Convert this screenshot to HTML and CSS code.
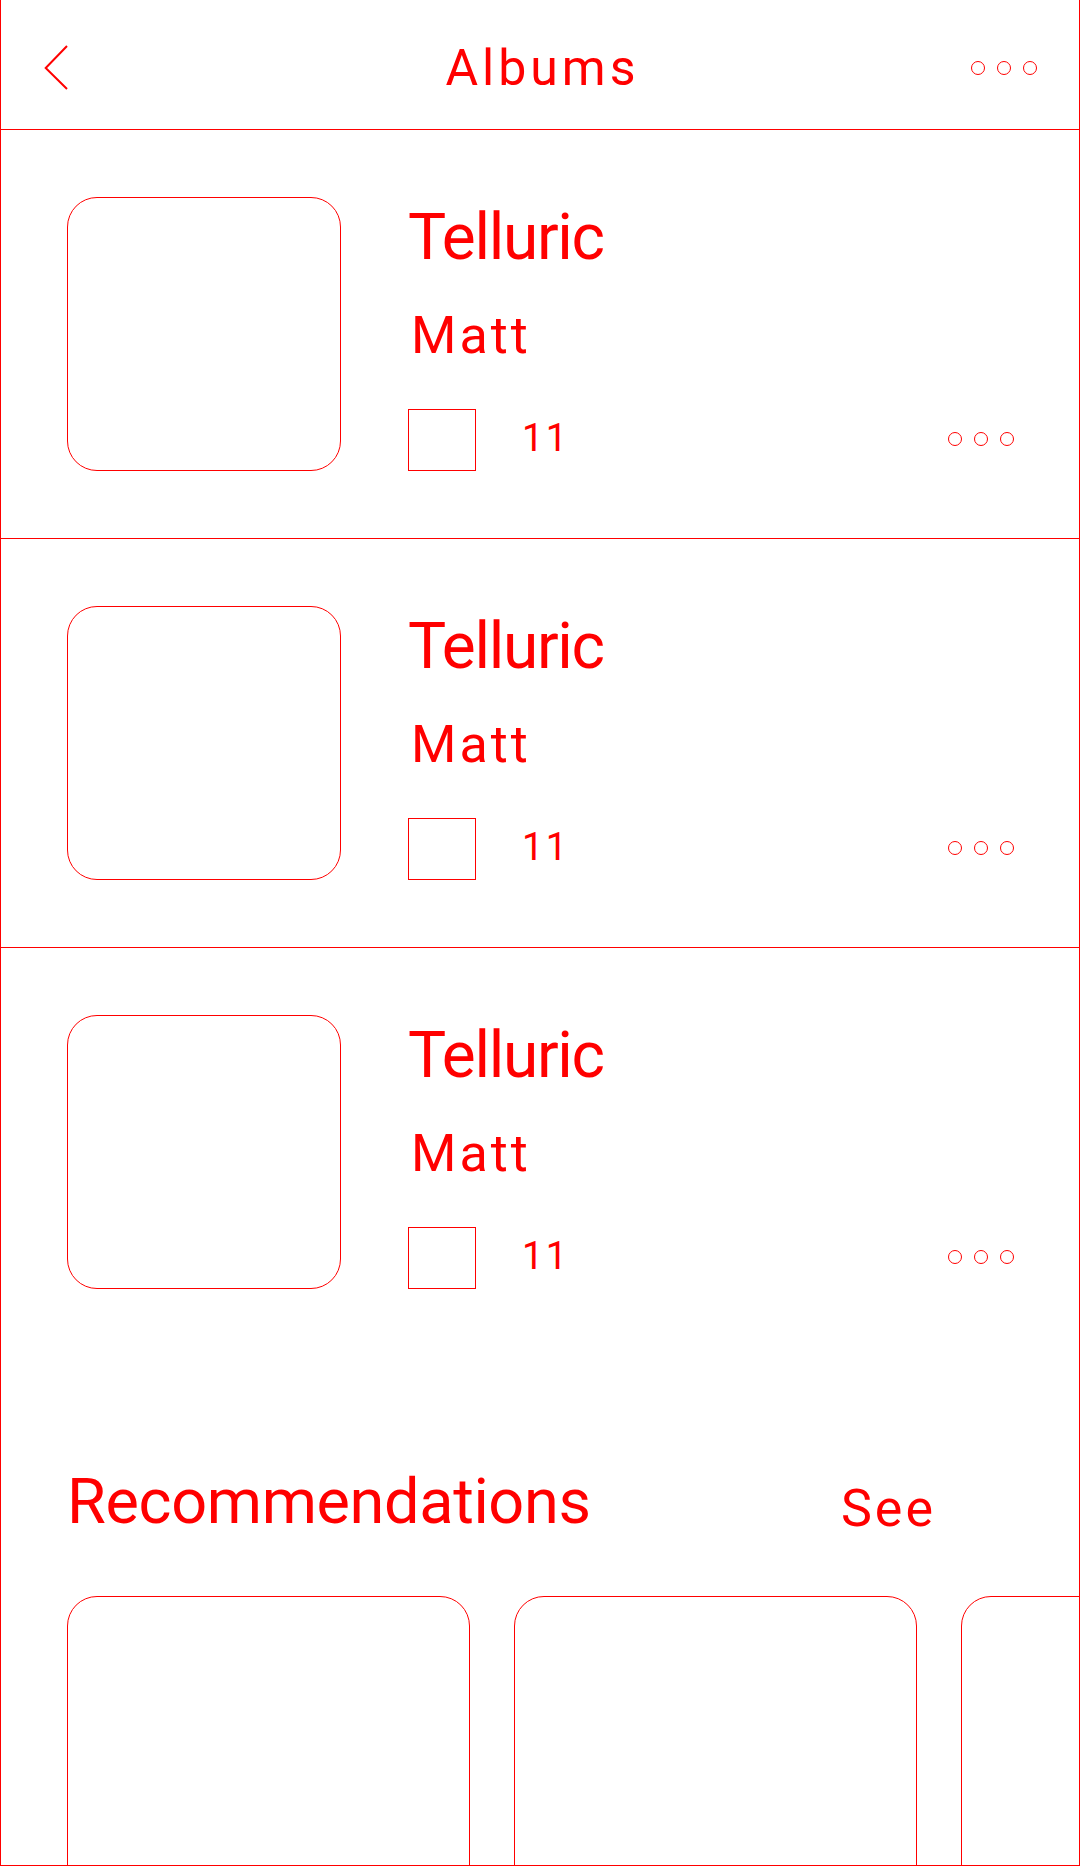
FILE: index.html
```html
<!DOCTYPE html>
<html lang="en">
<head>
  <meta charset="UTF-8" />
  <title>Albums</title>
  <link rel="stylesheet" href="styles.css">
</head>
<body>

  <div class="screen">

    <header class="topbar">
      <svg class="back" width="26" height="48" viewBox="0 0 26 48">
        <polyline points="23,2 1.7,24 23,45" fill="none" stroke="#ff0000" stroke-width="2" />
      </svg>
      <h1>Albums</h1>
      <div class="dots">
        <span></span><span></span><span></span>
      </div>
    </header>

    <div class="album">
      <div class="cover"></div>
      <div class="album-info">
        <h2>Telluric</h2>
        <p class="artist">Matt</p>
        <div class="meta">
          <div class="thumb"></div>
          <span class="count">11</span>
          <div class="dots small">
            <span></span><span></span><span></span>
          </div>
        </div>
      </div>
    </div>

    <div class="album">
      <div class="cover"></div>
      <div class="album-info">
        <h2>Telluric</h2>
        <p class="artist">Matt</p>
        <div class="meta">
          <div class="thumb"></div>
          <span class="count">11</span>
          <div class="dots small">
            <span></span><span></span><span></span>
          </div>
        </div>
      </div>
    </div>

    <div class="album last">
      <div class="cover"></div>
      <div class="album-info">
        <h2>Telluric</h2>
        <p class="artist">Matt</p>
        <div class="meta">
          <div class="thumb"></div>
          <span class="count">11</span>
          <div class="dots small">
            <span></span><span></span><span></span>
          </div>
        </div>
      </div>
    </div>

    <section class="recs">
      <div class="recs-head">
        <h3>Recommendations</h3>
        <a class="see" href="#">See</a>
      </div>
      <div class="rec-list">
        <div class="rec-card"></div>
        <div class="rec-card"></div>
        <div class="rec-card"></div>
      </div>
    </section>

  </div>

</body>
</html>
```

FILE: styles.css
```css
body {
  margin: 0;
  background: #fff;
  font-family: Roboto, "Liberation Sans", sans-serif;
  color: #ff0000;
}

.screen {
  width: 1080px;
  height: 1866px;
  box-sizing: border-box;
  border: 1px solid #ff0000;
  border-top: none;
  overflow: hidden;
}

/* top bar */
.topbar {
  height: 122px;
  padding: 7px 42px 0 43px;
  border-bottom: 1px solid #ff0000;
  display: grid;
  grid-template-columns: 1fr auto 1fr;
  align-items: center;
}

.back {
  display: block;
}

.topbar h1 {
  margin: 0 -4px 0 0;
  font-size: 50px;
  font-weight: 400;
  line-height: 50px;
  letter-spacing: 4px;
}

.dots {
  display: flex;
  gap: 12px;
  justify-self: end;
}

.dots span {
  width: 14px;
  height: 14px;
  box-sizing: border-box;
  border: 1px solid #ff0000;
  border-radius: 50%;
}

/* album rows */
.album {
  height: 409px;
  box-sizing: border-box;
  border-bottom: 1px solid #ff0000;
  display: flex;
  gap: 67px;
  padding: 67px 65px 0 66px;
}

.album.last {
  border-bottom: none;
  height: 408px;
}

.cover {
  width: 274px;
  height: 274px;
  flex-shrink: 0;
  box-sizing: border-box;
  border: 1px solid #ff0000;
  border-radius: 30px;
}

.album-info {
  flex: 1;
  height: 274px;
  display: flex;
  flex-direction: column;
}

.album-info h2 {
  margin: 9px 0 0;
  font-size: 64px;
  font-weight: 400;
  line-height: 64px;
  letter-spacing: -1.3px;
}

.artist {
  margin: 40px 0 0 3px;
  font-size: 52px;
  line-height: 52px;
  letter-spacing: 3px;
}

.meta {
  margin-top: auto;
  display: flex;
  align-items: center;
}

.thumb {
  width: 68px;
  height: 62px;
  box-sizing: border-box;
  border: 1px solid #ff0000;
}

.count {
  margin: -4px 0 0 46px;
  font-size: 38px;
  line-height: 38px;
  letter-spacing: 2.5px;
}

.meta .dots {
  margin-left: auto;
  margin-top: -2px;
}

/* recommendations */
.recs {
  padding: 114px 0 0 66px;
}

.recs-head {
  display: flex;
  justify-content: space-between;
  align-items: flex-end;
  padding-right: 143px;
}

.recs-head h3 {
  margin: 0;
  font-size: 63px;
  font-weight: 400;
  line-height: 63px;
  letter-spacing: -0.35px;
}

.see {
  color: #ff0000;
  text-decoration: none;
  font-size: 52px;
  line-height: 48px;
  letter-spacing: 3px;
}

.rec-list {
  display: flex;
  gap: 44px;
  margin-top: 63px;
}

.rec-card {
  width: 403px;
  height: 400px;
  flex-shrink: 0;
  box-sizing: border-box;
  border: 1px solid #ff0000;
  border-radius: 30px;
}
```
